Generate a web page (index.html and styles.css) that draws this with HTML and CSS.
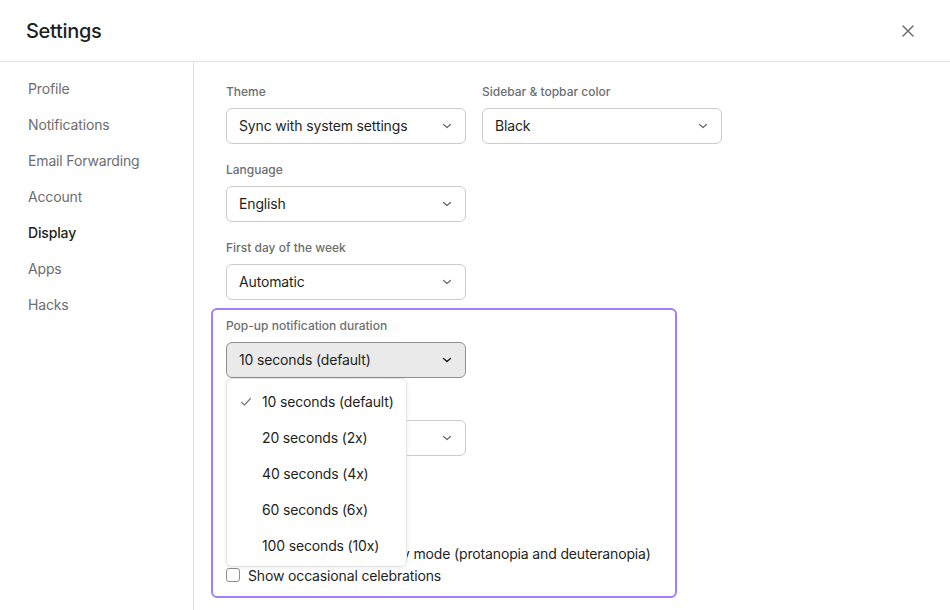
FILE: index.html
```html
<!DOCTYPE html>
<html lang="en">
<head>
  <meta charset="UTF-8">
  <meta name="viewport" content="width=device-width, initial-scale=1.0">
  <title>Settings</title>
  <link rel="stylesheet" href="styles.css">
</head>
<body>
  <div class="header">
    <h1>Settings</h1>
    <button class="close" aria-label="Close">
      <svg width="14" height="14" viewBox="0 0 14 14"><path d="M2 2 L12 12 M12 2 L2 12" stroke="#6d6e6f" stroke-width="1.5" stroke-linecap="round"/></svg>
    </button>
  </div>

  <div class="layout">
    <ul class="sidebar">
      <li>Profile</li>
      <li>Notifications</li>
      <li>Email Forwarding</li>
      <li>Account</li>
      <li class="active">Display</li>
      <li>Apps</li>
      <li>Hacks</li>
    </ul>

    <div class="main">
      <div class="row">
        <div class="field">
          <label>Theme</label>
          <div class="select">Sync with system settings <svg class="chev" width="10" height="6" viewBox="0 0 10 6"><path d="M1.5 1.5 L5 4.5 L8.5 1.5" fill="none" stroke="currentColor" stroke-width="1.3" stroke-linecap="round" stroke-linejoin="round"/></svg></div>
        </div>
        <div class="field">
          <label>Sidebar &amp; topbar color</label>
          <div class="select">Black <svg class="chev" width="10" height="6" viewBox="0 0 10 6"><path d="M1.5 1.5 L5 4.5 L8.5 1.5" fill="none" stroke="currentColor" stroke-width="1.3" stroke-linecap="round" stroke-linejoin="round"/></svg></div>
        </div>
      </div>

      <div class="field">
        <label>Language</label>
        <div class="select">English <svg class="chev" width="10" height="6" viewBox="0 0 10 6"><path d="M1.5 1.5 L5 4.5 L8.5 1.5" fill="none" stroke="currentColor" stroke-width="1.3" stroke-linecap="round" stroke-linejoin="round"/></svg></div>
      </div>

      <div class="field">
        <label>First day of the week</label>
        <div class="select">Automatic <svg class="chev" width="10" height="6" viewBox="0 0 10 6"><path d="M1.5 1.5 L5 4.5 L8.5 1.5" fill="none" stroke="currentColor" stroke-width="1.3" stroke-linecap="round" stroke-linejoin="round"/></svg></div>
      </div>

      <div class="highlight">
        <div class="field popup-field">
          <label>Pop-up notification duration</label>
          <div class="select open">10 seconds (default) <svg class="chev" width="10" height="6" viewBox="0 0 10 6"><path d="M1.5 1.5 L5 4.5 L8.5 1.5" fill="none" stroke="currentColor" stroke-width="1.5" stroke-linecap="round" stroke-linejoin="round"/></svg></div>

          <!-- open dropdown of the duration select -->
          <ul class="menu">
            <li class="selected">
              <svg class="check" width="12" height="10" viewBox="0 0 12 10"><path d="M1.5 5.2 L4.5 8 L10.5 1.5" fill="none" stroke="#7a7b7c" stroke-width="1.2" stroke-linecap="round" stroke-linejoin="round"/></svg>
              10 seconds (default)
            </li>
            <li>20 seconds (2x)</li>
            <li>40 seconds (4x)</li>
            <li>60 seconds (6x)</li>
            <li>100 seconds (10x)</li>
          </ul>
        </div>

        <div class="field">
          <label>Emoji skin tone</label>
          <div class="select">Default <svg class="chev" width="10" height="6" viewBox="0 0 10 6"><path d="M1.5 1.5 L5 4.5 L8.5 1.5" fill="none" stroke="currentColor" stroke-width="1.3" stroke-linecap="round" stroke-linejoin="round"/></svg></div>
        </div>

        <div class="field">
          <label>Accessibility</label>
          <div class="check-row"><span class="box"></span>Reduce motion</div>
          <div class="check-row"><span class="box"></span>Open links in new tab</div>
          <div class="check-row"><span class="box"></span>Use a color blind friendly mode (protanopia and deuteranopia)</div>
          <div class="check-row"><span class="box"></span>Show occasional celebrations</div>
        </div>
      </div>
    </div>
  </div>
</body>
</html>
```

FILE: styles.css
```css
body {
  margin: 0;
  font-family: Inter, "Liberation Sans", sans-serif;
  color: #1e1f21;
  background: #fff;
  font-size: 14px;
  letter-spacing: -0.15px;
}

.header {
  height: 61px;
  border-bottom: 1px solid #e2e2e2;
  display: flex;
  align-items: center;
  justify-content: space-between;
  padding: 0 35px 0 26px;
}

.header h1 {
  margin: 0;
  font-size: 20px;
  font-weight: 500;
  letter-spacing: -0.3px;
}

.close {
  border: none;
  background: none;
  padding: 0;
  display: flex;
  cursor: pointer;
}

.layout {
  display: flex;
  height: 548px;
}

.sidebar {
  list-style: none;
  margin: 0;
  padding: 9px 0 0 28px;
  width: 165px;
  border-right: 1px solid #e2e2e2;
}

.sidebar li {
  line-height: 36px;
  color: #6d6e6f;
}

.sidebar li.active {
  color: #1e1f21;
  font-weight: 500;
}

.main {
  padding: 21px 0 0 32px;
}

.row {
  display: flex;
  gap: 16px;
}

.field {
  margin-bottom: 17px;
}

.field label {
  display: block;
  font-size: 12px;
  line-height: 16px;
  font-weight: 500;
  color: #6d6e6f;
  padding-top: 1px;
  margin-bottom: 8px;
  letter-spacing: 0;
}

.select {
  box-sizing: border-box;
  width: 240px;
  height: 36px;
  border: 1px solid #cfcbcb;
  border-radius: 6px;
  padding: 0 13px 2px 12px;
  display: flex;
  align-items: center;
  justify-content: space-between;
}

.chev {
  color: #6d6e6f;
  margin-top: 2px;
}

.select.open {
  background: #eaeaea;
  border-color: #8e8e8e;
}

.select.open .chev {
  color: #1e1f21;
}

/* outline around the duration section */
.highlight {
  margin: -9px 0 0 -15px;
  width: 436px;
  padding: 7px 13px 10px;
  border: 2px solid #a67ff5;
  border-radius: 6px;
}

.highlight .field:last-child {
  margin-bottom: 0;
}

.popup-field {
  position: relative;
}

.menu {
  position: absolute;
  top: 61px;
  left: 0;
  z-index: 2;
  width: 179px;
  margin: 0;
  padding: 5px 0 2px;
  list-style: none;
  background: #fff;
  border: 1px solid #e4e4e4;
  border-radius: 6px;
  box-shadow: 0 1px 4px rgba(0, 0, 0, 0.08);
}

.menu li {
  position: relative;
  line-height: 36px;
  padding-left: 35px;
}

.menu .check {
  position: absolute;
  left: 13px;
  top: 13px;
}

.check-row {
  display: flex;
  align-items: center;
  height: 22px;
}

.check-row .box {
  box-sizing: border-box;
  width: 14px;
  height: 14px;
  border: 1px solid #8e8e8e;
  border-radius: 3px;
  margin-right: 8px;
}
```
